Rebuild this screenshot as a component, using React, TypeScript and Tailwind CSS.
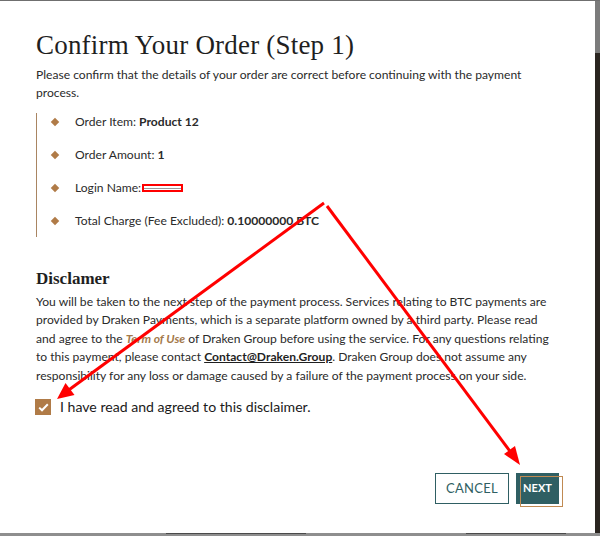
import React, { useState } from 'react';

const TEAL = '#2f5f63';
const BROWN = '#b07b47';

const items: { label: string; value?: string; redacted?: boolean }[] = [
  { label: 'Order Item:', value: 'Product 12' },
  { label: 'Order Amount:', value: '1' },
  { label: 'Login Name:', redacted: true },
  { label: 'Total Charge (Fee Excluded):', value: '0.10000000 BTC' },
];

// 红色标注箭头
const Annotations: React.FC = () => (
  <svg className="absolute inset-0 pointer-events-none" width="600" height="536" viewBox="0 0 600 536">
    <line x1="324" y1="203" x2="66" y2="392" stroke="#ff0000" strokeWidth="3" />
    <polygon points="57,399 74.5,395 65.5,383" fill="#ff0000" />
    <line x1="327" y1="206" x2="512" y2="454" stroke="#ff0000" strokeWidth="3" />
    <polygon points="520,465 515,446 504,454" fill="#ff0000" />
  </svg>
);

const App: React.FC = () => {
  const [agreed, setAgreed] = useState(true);

  return (
    <div className="relative w-[600px] h-[536px] overflow-hidden bg-[#8a8a8a] flex flex-col font-['Lato',sans-serif] text-[#2a2a2a]">
      {/* top edge */}
      <div className="h-px bg-[#6f6f6f] shrink-0" />

      <div className="flex flex-1 min-h-0">
        {/* Modal */}
        <div className="w-[595px] bg-white flex flex-col pl-9 pr-9 pt-[28px] overflow-hidden whitespace-nowrap">
          <h1 className="font-['Liberation_Serif',serif] text-[27px] leading-[32px] text-[#1f1f1f] tracking-[0.2px]">
            Confirm Your Order (Step 1)
          </h1>
          <p className="mt-[5px] text-[12.1px] leading-[18px]">
            Please confirm that the details of your order are correct before continuing with the payment
            <br />
            process.
          </p>

          {/* Order details */}
          <ul className="mt-[11px] border-l border-[#a98562] pb-[7px]">
            {items.map((item) => (
              <li key={item.label} className="flex items-center leading-[18px] text-[12.1px] mb-[15px] last:mb-0">
                <span className="ml-[15px] w-[6px] h-[6px] rotate-45" style={{ backgroundColor: BROWN }} />
                <span className="ml-[17px]">
                  {item.label}{' '}
                  {item.value && <span className="font-bold">{item.value}</span>}
                </span>
                {item.redacted && (
                  <span className="ml-px inline-flex items-center w-[41px] h-[8px] border-2 border-[#ff0000] bg-white">
                    <span className="w-full h-px bg-[#9a9a9a]" />
                  </span>
                )}
              </li>
            ))}
          </ul>

          {/* Disclaimer */}
          <h3 className="mt-[32px] font-['Liberation_Serif',serif] font-bold text-[17px] leading-[20px] text-[#1f1f1f]">
            Disclamer
          </h3>
          <p className="mt-[4px] text-[12.1px] leading-[18.4px]">
            You will be taken to the next step of the payment process. Services relating to BTC payments are
            <br />
            provided by Draken Payments, which is a separate platform owned by a third party. Please read
            <br />
            and agree to the{' '}
            <span className="italic font-bold text-[#a47a4c]">Term of Use</span> of Draken Group before using the
            service. For any questions relating
            <br />
            to this payment, please contact{' '}
            <span className="font-bold underline text-[#1f1f1f]">Contact@Draken.Group</span>. Draken Group does not
            assume any
            <br />
            responsibility for any loss or damage caused by a failure of the payment process on your side.
          </p>

          <label className="mt-[13px] flex items-center cursor-pointer -ml-px">
            <button
              onClick={() => setAgreed(!agreed)}
              className="w-4 h-4 flex items-center justify-center"
              style={{ backgroundColor: agreed ? BROWN : '#fff' }}
            >
              {agreed && (
                <svg width="11" height="9" viewBox="0 0 11 9">
                  <path d="M1.2 4.6 L4 7.3 L9.8 1.3" stroke="#fff" strokeWidth="2" fill="none" />
                </svg>
              )}
            </button>
            <span className="ml-[9px] text-[14.1px] leading-[18px] text-[#1a1a1a]">
              I have read and agreed to this disclaimer.
            </span>
          </label>

          {/* Buttons */}
          <div className="mt-[57px] flex justify-end gap-[7px]">
            <button
              className="w-[74px] h-[31px] border bg-white text-[13px] tracking-[0.3px]"
              style={{ borderColor: TEAL, color: TEAL }}
            >
              CANCEL
            </button>
            <div className="relative">
              <button
                className="w-[43px] h-[31px] text-white font-bold text-[11px]"
                style={{ backgroundColor: TEAL }}
              >
                NEXT
              </button>
              <div className="absolute left-[4px] top-[3px] w-[43px] h-[31px] border border-[#c08a52]" />
            </div>
          </div>
        </div>

        {/* right edge */}
        <div className="flex-1 flex flex-col">
          <div className="h-[52px] bg-[#7b7b7b]" />
          <div className="flex-1 bg-[#2a2520]" />
        </div>
      </div>

      {/* bottom edge: page behind the modal */}
      <div className="h-[3px] shrink-0 bg-[#8e8e8e] flex items-start">
        <div className="ml-[166px] w-[140px] h-px bg-[#4a4a4a]" />
        <div className="ml-[160px] w-[100px] h-px bg-[#4a4a4a]" />
      </div>

      <Annotations />
    </div>
  );
};

export default App;
